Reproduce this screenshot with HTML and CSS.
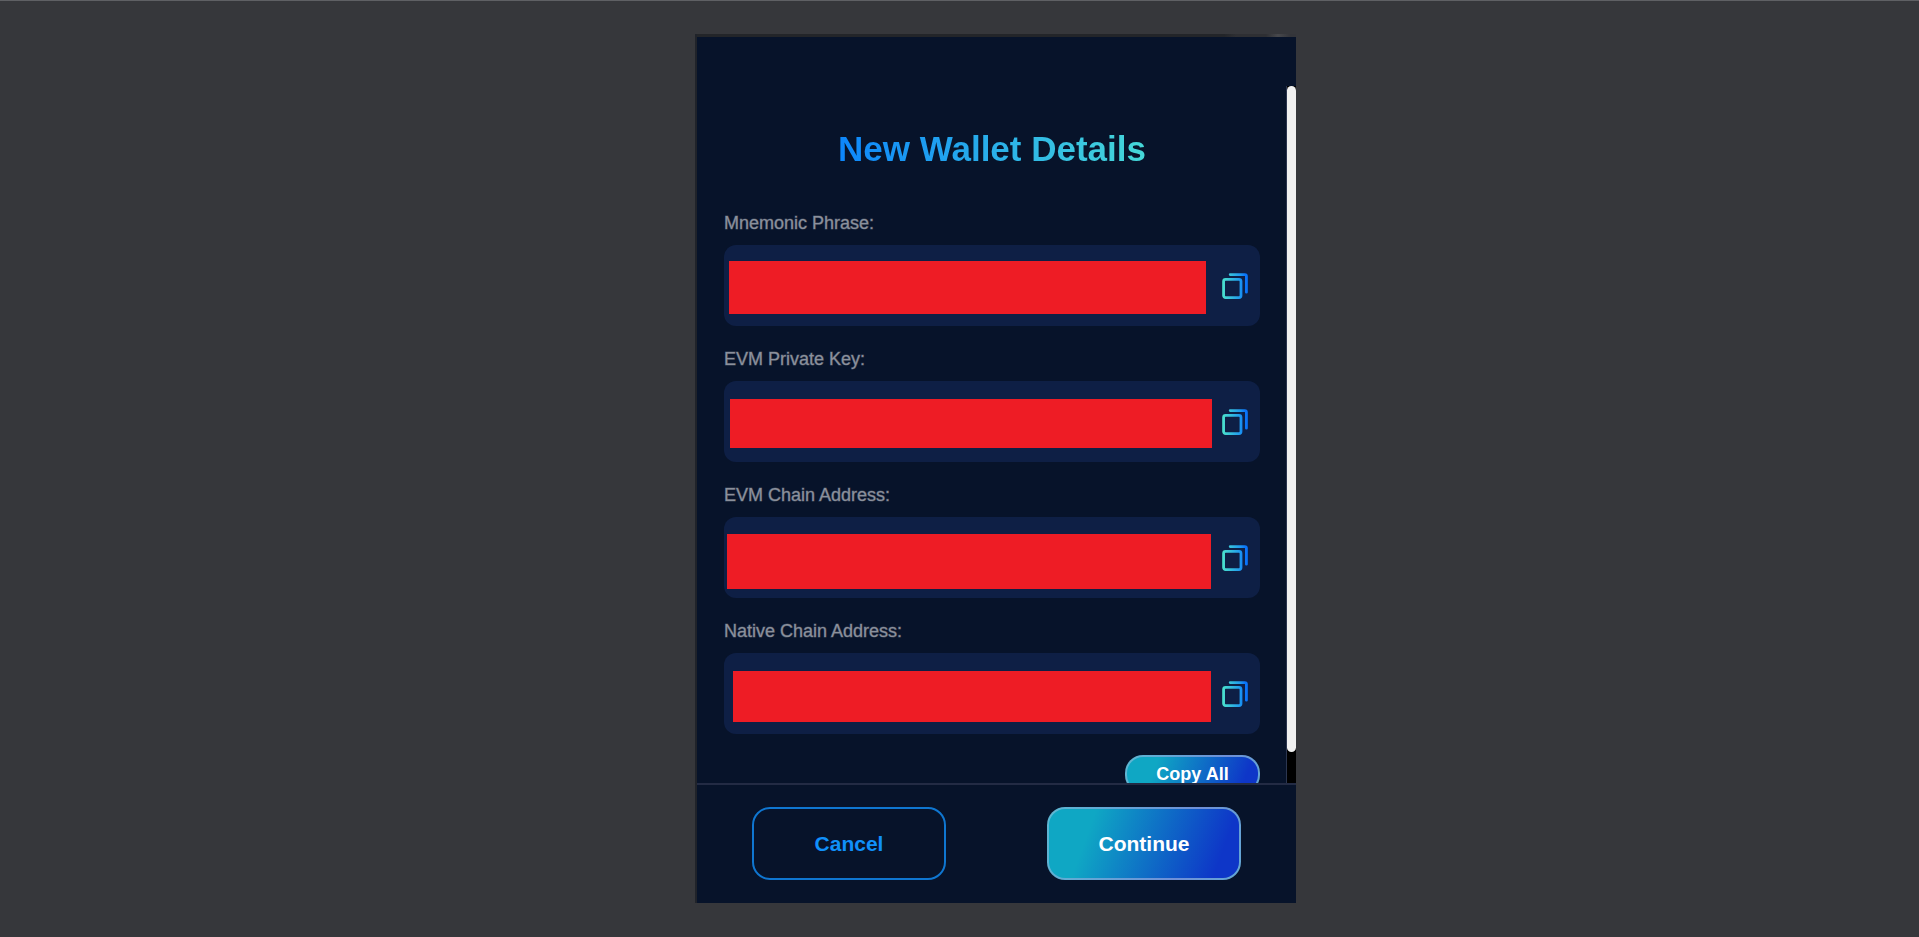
FILE: index.html
```
<!DOCTYPE html>
<html lang="en">
<head>
    <meta charset="UTF-8">
    <title>New Wallet Details</title>
    <link rel="stylesheet" href="styles.css">
</head>
<body>
<svg class="defs" width="0" height="0" aria-hidden="true">
    <defs>
        <linearGradient id="copyGrad" gradientUnits="userSpaceOnUse" x1="0" y1="13" x2="26" y2="13">
            <stop offset="0" stop-color="#4be3cb"/>
            <stop offset="0.7" stop-color="#1e98f0"/>
            <stop offset="0.9" stop-color="#0a74fa"/>
        </linearGradient>
        <symbol id="copy" viewBox="0 0 26 26">
            <g fill="none" stroke="url(#copyGrad)" stroke-width="2.8" stroke-linecap="round" stroke-linejoin="round">
                <rect x="1.6" y="6.4" width="17.4" height="18.2" rx="2"/>
                <path d="M8.2 1.6H22.8Q24.4 1.6 24.4 3.2V19.2"/>
            </g>
        </symbol>
    </defs>
</svg>
<main class="wallet">
    <div class="edge"></div>
    <div class="content">
        <div class="details">
            <h1 class="title">New Wallet Details</h1>
            <div class="field">
                <label for="mnemonic">Mnemonic Phrase:</label>
                <div class="box">
                    <output id="mnemonic" class="secret mnemonic"></output>
                    <button class="copy" type="button" aria-label="Copy mnemonic phrase"><svg width="26" height="26"><use href="#copy"/></svg></button>
                </div>
            </div>
            <div class="field">
                <label for="key">EVM Private Key:</label>
                <div class="box">
                    <output id="key" class="secret key"></output>
                    <button class="copy" type="button" aria-label="Copy private key"><svg width="26" height="26"><use href="#copy"/></svg></button>
                </div>
            </div>
            <div class="field">
                <label for="evm">EVM Chain Address:</label>
                <div class="box">
                    <output id="evm" class="secret evm"></output>
                    <button class="copy" type="button" aria-label="Copy EVM address"><svg width="26" height="26"><use href="#copy"/></svg></button>
                </div>
            </div>
            <div class="field">
                <label for="native">Native Chain Address:</label>
                <div class="box">
                    <output id="native" class="secret native"></output>
                    <button class="copy" type="button" aria-label="Copy native address"><svg width="26" height="26"><use href="#copy"/></svg></button>
                </div>
            </div>
            <button class="btn copy-all" type="button">Copy All</button>
        </div>
        <div class="scrollbar"><div class="thumb"></div></div>
    </div>
    <footer class="actions">
        <button class="btn cancel" type="button">Cancel</button>
        <button class="btn continue" type="button">Continue</button>
    </footer>
</main>
</body>
</html>
```
FILE: styles.css
```
*{
    margin: 0;
    padding: 0;
    box-sizing: border-box;
}
body{
    display: flex;
    justify-content: center;
    height: 100vh;
    padding: 33px 0 34px 72px;
    border-top: 1px solid #5f6064;
    background-color: #36373b;
    font-family: "Liberation Sans", Arial, sans-serif;
}
.defs{
    position: absolute;
}
.wallet{
    display: flex;
    flex-direction: column;
    width: 100%;
    max-width: 601px;
    border-left: 2px solid #20232a;
    background-color: #07132a;
}
.edge{
    flex: none;
    height: 3px;
    background: linear-gradient(to right, #232529 88%, #2e2f33 90%, #2e2f33 95%, #47484c 97%, #34353a 99%);
}

/* scrolling part */
.content{
    flex: 1;
    display: flex;
    min-height: 0;
    margin-top: 49px;
}
.details{
    flex: 1;
    display: flex;
    flex-direction: column;
    overflow: hidden;
    padding: 43px 26px 0 27px;
    border-right: 1px solid #2c3650;
}
.title{
    align-self: center;
    margin-bottom: 42px;
    font-size: 35px;
    line-height: 40px;
    background: linear-gradient(to right, #0d86fb, #46d8d8);
    -webkit-background-clip: text;
    background-clip: text;
    color: transparent;
}
.field{
    flex: none;
    margin-bottom: 21px;
}
.field label{
    display: block;
    margin-bottom: 10px;
    font-size: 18px;
    line-height: 24px;
    color: #8b909c;
    -webkit-text-stroke: 1px rgba(139, 144, 156, 0.4);
}
.box{
    display: flex;
    align-items: center;
    height: 81px;
    padding-right: 12px;
    border-radius: 12px;
    background-color: #0e1f45;
}
.secret{
    flex: 1;
    align-self: stretch;
    background-color: #ee1c25;
}
.mnemonic{
    margin: 16px 16px 12px 5px;
}
.key{
    margin: 18px 10px 14px 6px;
}
.evm{
    margin: 17px 11px 9px 3px;
}
.native{
    margin: 18px 11px 12px 9px;
}
.copy{
    width: 26px;
    height: 26px;
    border: none;
    background: none;
    cursor: pointer;
}
.copy svg{
    display: block;
}
.scrollbar{
    width: 9px;
    background-color: #000;
}
.thumb{
    height: 666px;
    max-height: 100%;
    border-radius: 5px;
    background-color: #f1f1f1;
}

/* buttons */
.btn{
    border: 2px solid transparent;
    border-radius: 18px;
    font-family: inherit;
    font-weight: bold;
    cursor: pointer;
}
.continue,
.copy-all{
    color: #fff;
    background: linear-gradient(110deg, #0fa7c4 22%, #0e36c8 88%) padding-box,
                linear-gradient(110deg, #5cb8d2, #6f8fd8 70%, #62a8d4) border-box;
}
.copy-all{
    flex: none;
    align-self: flex-end;
    width: 135px;
    height: 38px;
    font-size: 18px;
}
.actions{
    display: flex;
    justify-content: space-between;
    padding: 22px 55px 23px;
    border-top: 2px solid #232b44;
}
.cancel,
.continue{
    width: 194px;
    height: 73px;
    font-size: 21px;
}
.cancel{
    border-color: #0f76d0;
    background: none;
    color: #1090fa;
}
```
